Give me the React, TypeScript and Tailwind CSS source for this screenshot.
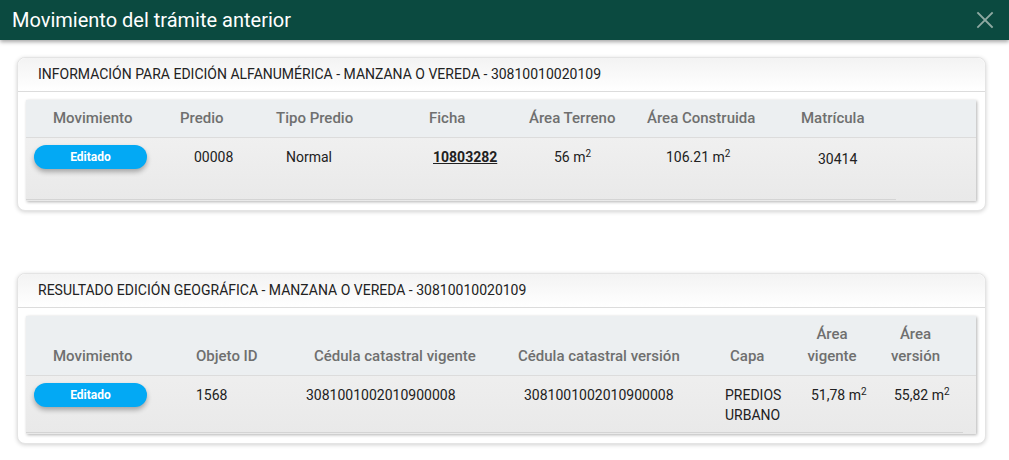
import React from 'react';

const headCls = 'flex items-end pb-2 pt-[7px] text-[15px] leading-[22px] font-medium text-[#6f6f6f]';
const cellCls = 'pt-[9px] text-[14px] leading-[20px] text-[#212121]';

function Sq({ v }: { v: string }) {
  return (
    <span>
      {v} m<sup className="text-[10px]">2</sup>
    </span>
  );
}

function Editado() {
  return (
    <div className="ml-2 mt-[-2px] w-[113px] h-6 rounded-full bg-[#03a9f4] text-white text-[12px] font-bold flex items-center justify-center shadow-[0_3px_5px_rgba(0,0,0,0.3)]">
      Editado
    </div>
  );
}

function Card({ title, children }: { title: string; children: React.ReactNode }) {
  return (
    <div className="bg-white rounded-lg border border-[#e4e4e4] shadow-[0_1px_4px_rgba(0,0,0,0.18)] pb-[9px]">
      <div className="h-[34px] flex items-center pl-5 border-b border-[#dcdcdc] bg-gradient-to-b from-[#f3f3f3] to-white text-[14px] text-[#222] rounded-t-lg">
        {title}
      </div>
      <div className="ml-2 mr-[9px] mt-[8px] shadow-[1px_1px_3px_rgba(0,0,0,0.3)] bg-gradient-to-b from-[#f4f4f4] to-[#e9e9e9]">
        {children}
      </div>
    </div>
  );
}

export default function App() {
  return (
    <div className="w-[1009px] h-[460px] bg-white overflow-hidden" style={{ fontFamily: 'Roboto, "Noto Sans", sans-serif' }}>
      <div className="h-10 bg-[#0b4a40] flex items-center justify-between pl-3 pr-2 shadow-[0_2px_4px_rgba(0,0,0,0.35)] relative">
        <h1 className="text-white text-[20px] leading-none">Movimiento del trámite anterior</h1>
        <svg width="18" height="18" viewBox="0 0 18 18" className="mr-[7px]" stroke="#8fa9a2" strokeWidth="1.8" strokeLinecap="square">
          <path d="M2 2L16 16M16 2L2 16" />
        </svg>
      </div>

      <div className="ml-[17px] mr-[23px] mt-[17px]">
        <Card title="INFORMACIÓN PARA EDICIÓN ALFANUMÉRICA - MANZANA O VEREDA - 30810010020109">
          <div className="bg-[#eceff1] border-b border-[#dcdcdc]">
            <div className="grid grid-cols-[135px_100px_150px_100px_120px_150px_115px] w-[870px]">
              <div className={`${headCls} pl-[27px]`}>Movimiento</div>
              <div className={`${headCls} pl-[19px]`}>Predio</div>
              <div className={`${headCls} pl-[15px]`}>Tipo Predio</div>
              <div className={`${headCls} pl-[18px]`}>Ficha</div>
              <div className={`${headCls} pl-[18px]`}>Área Terreno</div>
              <div className={`${headCls} pl-[16px]`}>Área Construida</div>
              <div className={`${headCls} pl-[20px]`}>Matrícula</div>
            </div>
          </div>
          <div className="grid grid-cols-[135px_100px_150px_100px_120px_150px_115px] w-[870px] h-[62px] border-b border-[#d4d4d4]">
            <div className="pt-[9px]"><Editado /></div>
            <div className={`${cellCls} pl-[33px]`}>00008</div>
            <div className={`${cellCls} pl-[25px]`}>Normal</div>
            <div className={`${cellCls} pl-[22px] font-bold underline text-[#333]`}>10803282</div>
            <div className={`${cellCls} pl-[43px]`}><Sq v="56" /></div>
            <div className={`${cellCls} pl-[35px]`}><Sq v="106.21" /></div>
            <div className={`${cellCls} pl-[37px] pt-[11px]`}>30414</div>
          </div>
          <div className="h-[1px]" />
        </Card>

        <div className="h-[62px]" />

        <Card title="RESULTADO EDICIÓN GEOGRÁFICA - MANZANA O VEREDA - 30810010020109">
          <div className="bg-[#eceff1] border-b border-[#dcdcdc]">
            <div className="grid grid-cols-[135px_130px_210px_205px_90px_72px_95px] w-[937px]">
              <div className={`${headCls} pl-[27px]`}>Movimiento</div>
              <div className={`${headCls} pl-[35px]`}>Objeto ID</div>
              <div className={`${headCls} pl-[23px]`}>Cédula catastral vigente</div>
              <div className={`${headCls} pl-[17px]`}>Cédula catastral versión</div>
              <div className={`${headCls} pl-[24px]`}>Capa</div>
              <div className={`${headCls} justify-center text-center`}>Área<br />vigente</div>
              <div className={`${headCls} justify-center text-center`}>Área<br />versión</div>
            </div>
          </div>
          <div className="grid grid-cols-[135px_130px_210px_205px_90px_72px_95px] w-[937px] h-[57px] border-b border-[#d4d4d4]">
            <div className="pt-[9px]"><Editado /></div>
            <div className={`${cellCls} pl-[35px]`}>1568</div>
            <div className={`${cellCls} pl-[15px]`}>3081001002010900008</div>
            <div className={`${cellCls} pl-[23px]`}>3081001002010900008</div>
            <div className={`${cellCls} pl-[19px]`}>PREDIOS<br />URBANO</div>
            <div className={`${cellCls} pl-[15px]`}><Sq v="51,78" /></div>
            <div className={`${cellCls} pl-[26px]`}><Sq v="55,82" /></div>
          </div>
          <div className="h-[1px]" />
        </Card>
      </div>
    </div>
  );
}
